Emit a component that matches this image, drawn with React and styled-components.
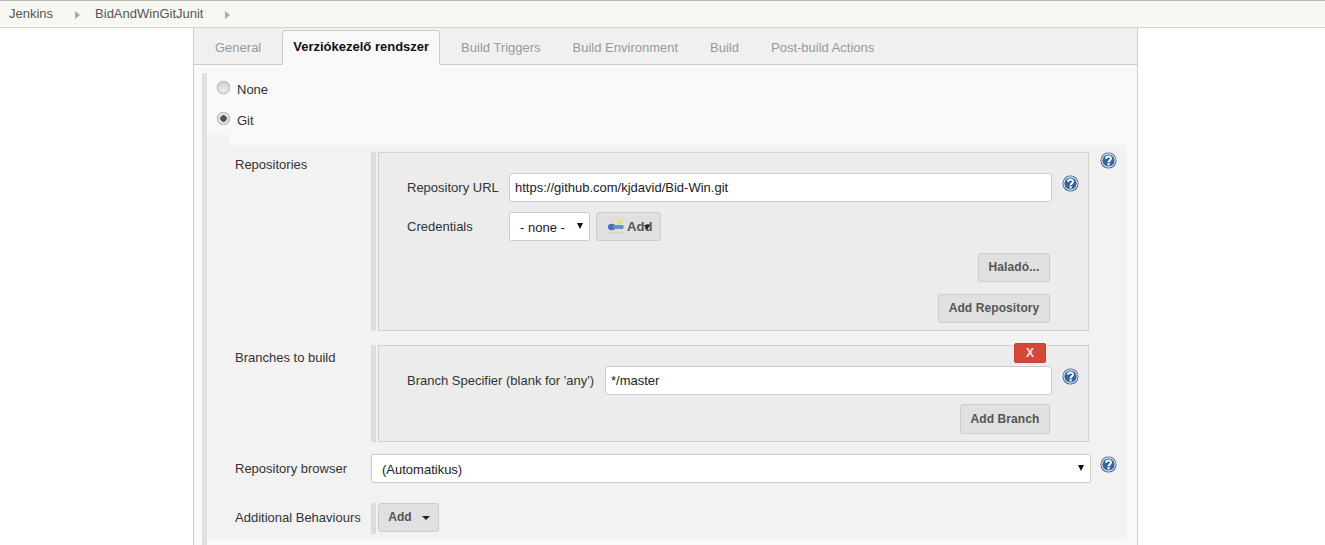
import React from 'react'
import styled, { createGlobalStyle } from 'styled-components'

const GlobalStyle = createGlobalStyle`
  html, body {
    margin: 0;
    height: 545px;
    overflow: hidden;
    background: #fff;
    font-family: "Liberation Sans", Arial, sans-serif;
    font-size: 13px;
    color: #333;
  }
`

const Breadcrumbs = styled.div`
  height: 26px;
  display: flex;
  align-items: center;
  padding-left: 9px;
  background: #f8f8f2;
  border-top: 1px solid #b8b8b8;
  border-bottom: 1px solid #d4d4d4;
  line-height: 26px;
  color: #555;
`

const Crumb = styled.span`
  display: block;
`

const CrumbArrow = styled.span`
  width: 0;
  height: 0;
  margin: 1px 15px 0 22px;
  border-left: 5px solid #aaa;
  border-top: 4px solid transparent;
  border-bottom: 4px solid transparent;
`

const Panel = styled.div`
  width: 943px;
  height: 517px;
  margin-left: 193px;
  background: #f9f9f9;
  border-left: 1px solid #ccc;
  border-right: 1px solid #ccc;
`

const TabBar = styled.div`
  height: 36px;
  display: flex;
  align-items: flex-end;
  padding-left: 5px;
  background: #f0f0f0;
  border-bottom: 1px solid #ccc;
`

const Tab = styled.div`
  height: 33px;
  line-height: 31px;
  padding: 0 16px;
  margin-bottom: -1px;
  color: #999;
`

const ActiveTab = styled(Tab)`
  padding: 0 10px;
  margin: 0 5px -1px;
  font-weight: bold;
  color: #111;
  background: #f9f9f9;
  border: 1px solid #ccc;
  border-bottom: 1px solid #f9f9f9;
  border-radius: 4px 4px 0 0;
`

const Section = styled.div`
  margin: 8px 0 0 8px;
  padding: 1px 0 10px;
  border-left: 5px solid #e0e0e0;
`

const RadioRow = styled.label`
  height: ${p => p.$height}px;
  display: flex;
  align-items: center;
  padding-left: 10px;
  color: #333;
`

const Radio = styled.span`
  width: 13px;
  height: 13px;
  margin: -4px 7px 0 0;
  box-sizing: border-box;
  border-radius: 50%;
  border: 1px solid #b4b4b4;
  background: ${p => (p.$checked ? 'radial-gradient(circle, #555 0 3px, #e4e4e4 3.5px)' : 'linear-gradient(#d4d4d4, #ececec)')};
  box-shadow: 0 0 1px #999;
`

const Notch = styled.div`
  width: 23px;
  height: 10px;
  background: #f2f2f2;
`

const Nested = styled.div`
  width: 920px;
  box-sizing: border-box;
  padding: 7px 0 5px 28px;
  background: #f2f2f2;
`

const Row = styled.div`
  display: flex;
  align-items: flex-start;
  margin-bottom: ${p => p.$gap || 0}px;
`

const Label = styled.div`
  width: 136px;
  flex: none;
  padding-top: ${p => p.$top}px;
  line-height: 16px;
`

const Bar = styled.div`
  width: 718px;
  flex: none;
  box-sizing: border-box;
  border-left: 5px solid #ddd;
  padding-left: 2px;
`

const Box = styled.div`
  position: relative;
  box-sizing: border-box;
  padding: 20px 10px 7px 28px;
  background: #ececec;
  border: 1px solid #d0d0d0;
`

const Field = styled.div`
  display: flex;
  align-items: center;
  margin-bottom: ${p => p.$gap || 0}px;
`

const FieldLabel = styled.div`
  width: ${p => p.$width}px;
  flex: none;
`

const TextInput = styled.input`
  box-sizing: border-box;
  flex: none;
  width: ${p => p.$width}px;
  height: 29px;
  padding: 0 5px;
  border: 1px solid #ccc;
  border-radius: 3px;
  background: #fff;
  font: 13px "Liberation Sans", Arial, sans-serif;
  color: #222;
  outline: none;
`

const SelectWrap = styled.div`
  position: relative;
  box-sizing: border-box;
  flex: none;
  width: ${p => p.$width}px;
  height: 29px;
  border: 1px solid #ccc;
  border-radius: 2px;
  background: #fff;
  &::after {
    content: '';
    position: absolute;
    right: 6px;
    top: 10px;
    border-top: 6px solid #111;
    border-left: 3px solid transparent;
    border-right: 3px solid transparent;
  }
`

const Select = styled.select`
  appearance: none;
  width: 100%;
  height: 100%;
  padding: 2px 0 0 ${p => p.$pad}px;
  border: 0;
  background: transparent;
  font: 13px "Liberation Sans", Arial, sans-serif;
  color: #222;
  outline: none;
`

const Button = styled.button`
  box-sizing: border-box;
  flex: none;
  height: ${p => p.$height || 29}px;
  width: ${p => p.$width}px;
  padding: 0 0 1px;
  display: flex;
  align-items: center;
  justify-content: center;
  background: #e0e0e0;
  border: 1px solid #ccc;
  border-radius: 3px;
  font: bold 12px "Liberation Sans", Arial, sans-serif;
  letter-spacing: 0.1px;
  color: #555;
`

const ButtonRow = styled.div`
  display: flex;
  justify-content: flex-end;
  margin: ${p => p.$top}px 28px 0 0;
`

const KeyButton = styled(Button)`
  position: relative;
  margin-left: 6px;
  justify-content: flex-start;
  padding-left: 10px;
  gap: 2px;
  font-size: 13px;
`

const DropButton = styled(Button)`
  padding-left: 1px;
`

const ArrowOver = styled.span`
  position: absolute;
  left: 47px;
  top: 12px;
  border-top: 5px solid #222;
  border-left: 3.5px solid transparent;
  border-right: 3.5px solid transparent;
`

const Caret = styled.span`
  margin: 1px 0 0 10px;
  border-top: 4px solid #222;
  border-left: 4px solid transparent;
  border-right: 4px solid transparent;
`

const DeleteButton = styled.button`
  position: absolute;
  top: -3px;
  right: 42px;
  width: 32px;
  height: 20px;
  padding: 0;
  box-sizing: border-box;
  background: #d24939;
  border: 1px solid #c63f30;
  border-radius: 2px;
  font: bold 12px "Liberation Sans", Arial, sans-serif;
  color: #f4e4e0;
`

const HelpSlot = styled.div`
  flex: none;
  margin: ${p => p.$margin};
  display: flex;
`

const Spacer = styled.div`
  height: 2px;
`

function HelpIcon() {
  return (
    <svg width="17" height="17" viewBox="0 0 17 17">
      <circle cx="8.5" cy="8.5" r="8" fill="#2c5a96" />
      <circle cx="8.5" cy="8.5" r="6.6" fill="none" stroke="#eef3f8" strokeWidth="1.1" />
      <circle cx="8.5" cy="8.5" r="5.7" fill="#34659f" />
      <path d="M6 6.7 C6.1 3.9 11 3.8 11 6.6 C11 8.3 8.6 8.4 8.6 10.4" fill="none" stroke="#fff" strokeWidth="1.9" />
      <rect x="7.5" y="11.3" width="2.2" height="2.1" fill="#fff" />
    </svg>
  )
}

function KeyIcon() {
  return (
    <svg width="18" height="16" viewBox="0 0 18 16">
      <ellipse cx="9" cy="14.5" rx="7" ry="1" fill="#d2d2d2" />
      <circle cx="12.5" cy="4" r="2.6" fill="#f2e25a" />
      <ellipse cx="4.8" cy="9" rx="3.8" ry="3.3" fill="#4673ad" />
      <rect x="6" y="7" width="10.5" height="4" rx="1.2" fill="#6490c4" />
    </svg>
  )
}

export default function App() {
  return (
    <>
      <GlobalStyle />
      <Breadcrumbs>
        <Crumb>Jenkins</Crumb>
        <CrumbArrow />
        <Crumb>BidAndWinGitJunit</Crumb>
        <CrumbArrow />
      </Breadcrumbs>
      <Panel>
        <TabBar>
          <Tab>General</Tab>
          <ActiveTab>Verziókezelő rendszer</ActiveTab>
          <Tab>Build Triggers</Tab>
          <Tab>Build Environment</Tab>
          <Tab>Build</Tab>
          <Tab>Post-build Actions</Tab>
        </TabBar>
        <Section>
          <RadioRow $height={31}><Radio />None</RadioRow>
          <RadioRow $height={30}><Radio $checked />Git</RadioRow>
          <Notch />
          <Nested>
            <Row $gap={14}>
              <Label $top={5}>Repositories</Label>
              <Bar>
                <Box>
                  <Field $gap={10}>
                    <FieldLabel $width={102}>Repository URL</FieldLabel>
                    <TextInput $width={543} readOnly value="https://github.com/kjdavid/Bid-Win.git" />
                    <HelpSlot $margin="-9px 0 0 10px"><HelpIcon /></HelpSlot>
                  </Field>
                  <Field>
                    <FieldLabel $width={102}>Credentials</FieldLabel>
                    <SelectWrap $width={81}>
                      <Select $pad={10}><option>- none -</option></Select>
                    </SelectWrap>
                    <KeyButton $width={65}>
                      <KeyIcon />Add
                      <ArrowOver />
                    </KeyButton>
                  </Field>
                  <ButtonRow $top={12}><Button $width={72}>Haladó...</Button></ButtonRow>
                  <ButtonRow $top={12}><Button $width={112}>Add Repository</Button></ButtonRow>
                </Box>
              </Bar>
              <HelpSlot $margin="0 0 0 11px"><HelpIcon /></HelpSlot>
            </Row>
            <Row $gap={12}>
              <Label $top={5}>Branches to build</Label>
              <Bar>
                <Box>
                  <DeleteButton>X</DeleteButton>
                  <Field>
                    <FieldLabel $width={198}>Branch Specifier (blank for 'any')</FieldLabel>
                    <TextInput $width={447} readOnly value="*/master" />
                    <HelpSlot $margin="-9px 0 0 10px"><HelpIcon /></HelpSlot>
                  </Field>
                  <ButtonRow $top={9}><Button $width={90} $height={30}>Add Branch</Button></ButtonRow>
                </Box>
              </Bar>
            </Row>
            <Row $gap={20}>
              <Label $top={7}>Repository browser</Label>
              <SelectWrap $width={720}>
                <Select $pad={10}><option>(Automatikus)</option></Select>
              </SelectWrap>
              <HelpSlot $margin="2px 0 0 9px"><HelpIcon /></HelpSlot>
            </Row>
            <Row>
              <Label $top={7}>Additional Behaviours</Label>
              <Bar>
                <DropButton $width={61}>Add<Caret /></DropButton>
                <Spacer />
              </Bar>
            </Row>
          </Nested>
        </Section>
      </Panel>
    </>
  )
}
